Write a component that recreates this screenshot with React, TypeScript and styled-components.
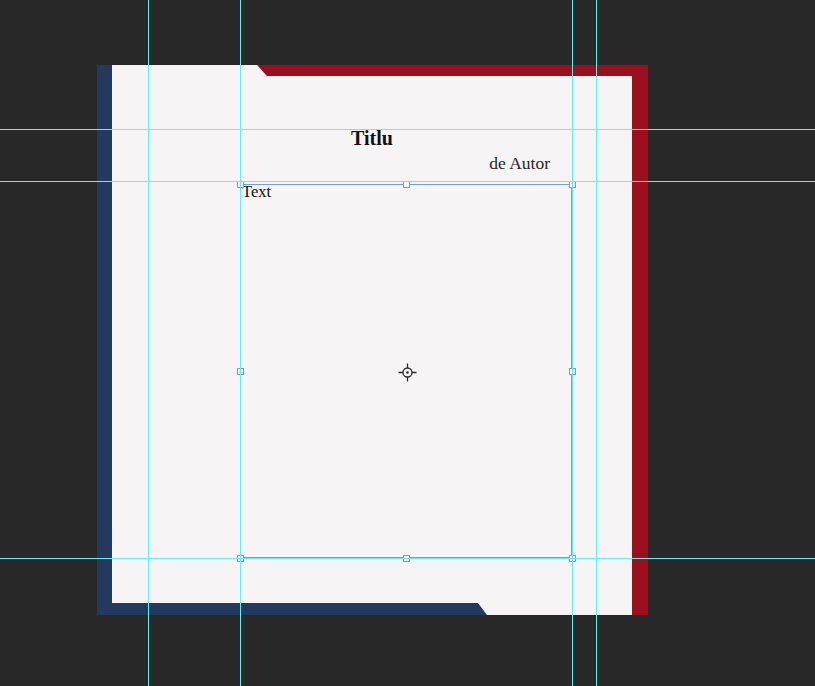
import styled, { createGlobalStyle } from "styled-components";

const GlobalStyle = createGlobalStyle`
  html, body {
    margin: 0;
    padding: 0;
    background: #282828;
  }
`;

const colors = {
  canvas: "#282828",
  paper: "#f6f4f5",
  navy: "#233a5f",
  crimson: "#9c0f1f",
  guide: "#5ff0f0",
  frame: "#6b9cf7",
  ink: "#141012",
};

const Workspace = styled.div`
  position: relative;
  width: 815px;
  height: 686px;
  box-sizing: border-box;
  padding: 65px 0 0 97px;
  background: ${colors.canvas};
  overflow: hidden;
  font-family: "Liberation Serif", "DejaVu Serif", serif;
`;

const Page = styled.div`
  display: grid;
  grid-template-columns: 15px 1fr 16px;
  grid-template-rows: 11px 1fr 12px;
  width: 551px;
  height: 550px;
`;

const SideBar = styled.div<{ $color: string; $col: number }>`
  grid-column: ${({ $col }) => $col};
  grid-row: 1 / 4;
  background: ${({ $color }) => $color};
`;

const TopStrip = styled.div`
  grid-column: 2;
  grid-row: 1;
  display: flex;
  background: ${colors.paper};
`;

const TopBand = styled.div`
  margin-left: 145px;
  flex: 1;
  background: ${colors.crimson};
  clip-path: polygon(0 0, 100% 0, 100% 100%, 10px 100%);
`;

const BottomStrip = styled.div`
  grid-column: 2;
  grid-row: 3;
  display: flex;
  background: ${colors.paper};
`;

const BottomBand = styled.div`
  width: 375px;
  background: ${colors.navy};
  clip-path: polygon(0 0, calc(100% - 9px) 0, 100% 100%, 0 100%);
`;

const Content = styled.div`
  grid-column: 2;
  grid-row: 2;
  display: flex;
  flex-direction: column;
  padding-top: 50px;
  background: ${colors.paper};
  color: ${colors.ink};
`;

const Title = styled.h1`
  margin: 0;
  font-size: 20px;
  line-height: 24px;
  font-weight: 700;
  text-align: center;
`;

const Author = styled.p`
  margin: 2px 0 0;
  padding-right: 82px;
  font-size: 17.5px;
  line-height: 22px;
  text-align: right;
  color: #2a2426;
`;

const TextFrame = styled.div`
  position: relative;
  margin: 10px 0 0 128px;
  width: 332px;
  height: 374px;
  box-sizing: border-box;
  border: 1px solid ${colors.frame};
  font-size: 16.5px;
  line-height: 14px;
  padding-left: 1px;
`;

const HandleLayer = styled.div`
  position: absolute;
  inset: -1px;
  pointer-events: none;
`;

const Handle = styled.span<{ $x: string; $y: string }>`
  position: absolute;
  left: ${({ $x }) => $x};
  top: ${({ $y }) => $y};
  width: 7px;
  height: 7px;
  box-sizing: border-box;
  margin: -3px 0 0 -3px;
  border: 1px solid ${colors.frame};
  background: #ffffff;
`;

const Crosshair = styled.svg`
  position: absolute;
  left: 157px;
  top: 178px;
  width: 19px;
  height: 19px;
`;

const Guide = styled.div<{ $axis: "x" | "y"; $at: number }>`
  position: absolute;
  pointer-events: none;
  background: ${colors.guide};
  ${({ $axis, $at }) =>
    $axis === "x"
      ? `left: ${$at}px; top: 0; width: 1px; height: 100%;`
      : `top: ${$at}px; left: 0; height: 1px; width: 100%;`}
`;

const handles: [string, string][] = [
  ["0%", "0%"],
  ["50%", "0%"],
  ["100%", "0%"],
  ["0%", "50%"],
  ["100%", "50%"],
  ["0%", "100%"],
  ["50%", "100%"],
  ["100%", "100%"],
];

const verticalGuides = [148, 240, 572, 596];
const horizontalGuides = [129, 181, 558];

export default function App() {
  return (
    <>
      <GlobalStyle />
      <Workspace>
        <Page>
          <SideBar $col={1} $color={colors.navy} />
          <TopStrip>
            <TopBand />
          </TopStrip>
          <Content>
            <Title>Titlu</Title>
            <Author>de Autor</Author>
            <TextFrame>
              Text
              <HandleLayer>
                {handles.map(([x, y]) => (
                  <Handle key={x + y} $x={x} $y={y} />
                ))}
              </HandleLayer>
              <Crosshair viewBox="0 0 19 19">
                <circle cx="9.5" cy="9.5" r="4.5" fill="none" stroke="#2b2b2b" strokeWidth="1.3" />
                <circle cx="9.5" cy="9.5" r="1.3" fill="#2b2b2b" />
                <path d="M9.5 0.5v4.5M9.5 14v4.5M0.5 9.5h4.5M14 9.5h4.5" stroke="#2b2b2b" strokeWidth="1.3" />
              </Crosshair>
            </TextFrame>
          </Content>
          <BottomStrip>
            <BottomBand />
          </BottomStrip>
          <SideBar $col={3} $color={colors.crimson} />
        </Page>
        {verticalGuides.map((x) => (
          <Guide key={`x${x}`} $axis="x" $at={x} />
        ))}
        {horizontalGuides.map((y) => (
          <Guide key={`y${y}`} $axis="y" $at={y} />
        ))}
      </Workspace>
    </>
  );
}
